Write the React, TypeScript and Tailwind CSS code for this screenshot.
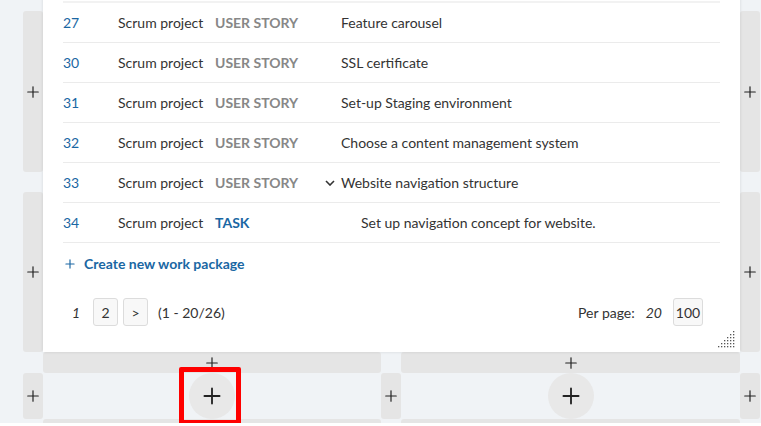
import * as React from "react";
import { Plus } from "lucide-react";

type Row = { id: number; type: "USER STORY" | "TASK"; subject: string; level?: "parent" | "child" };

const rows: Row[] = [
  { id: 27, type: "USER STORY", subject: "Feature carousel" },
  { id: 30, type: "USER STORY", subject: "SSL certificate" },
  { id: 31, type: "USER STORY", subject: "Set-up Staging environment" },
  { id: 32, type: "USER STORY", subject: "Choose a content management system" },
  { id: 33, type: "USER STORY", subject: "Website navigation structure", level: "parent" },
  { id: 34, type: "TASK", subject: "Set up navigation concept for website.", level: "child" },
];

function AddBar({ className }: { className: string }) {
  return (
    <div className={`flex items-center justify-center rounded-[3px] bg-[#e5e5e5] text-[#222] ${className}`}>
      <Plus className="h-[18px] w-[18px]" strokeWidth={1.6} />
    </div>
  );
}

function Grip() {
  const dots: React.ReactNode[] = [];
  for (let r = 0; r < 6; r++) {
    for (let c = 5 - r; c < 6; c++) {
      dots.push(<rect key={`${r}-${c}`} x={c * 3} y={r * 3} width="1.3" height="1.3" fill="#555" />);
    }
  }
  return (
    <svg width="18" height="18" viewBox="0 0 18 18" className="absolute bottom-[3px] right-[4px]">
      {dots}
    </svg>
  );
}

function PageBox({ children, wide }: { children: React.ReactNode; wide?: boolean }) {
  return (
    <span
      className={`flex h-[28px] items-center justify-center rounded-[3px] border border-[#dcdcdc] bg-[#f8f8f8] text-[14px] text-[#333] ${
        wide ? "w-[30px]" : "w-[25px]"
      }`}
    >
      {children}
    </span>
  );
}

function WorkPackages() {
  return (
    <div className="relative z-10 col-start-3 col-span-3 row-start-1 row-span-4 bg-white pl-5 pr-5 pt-[10px] shadow-[0_0_3px_rgba(0,0,0,0.12)]">
      <div className="border-t-2 border-[#f2f2f2]">
        {rows.map((r) => (
          <div key={r.id} className="flex h-10 items-center border-b border-[#ebebeb] text-[14px]">
            <span className="w-[55px] text-[#1a67a3]">{r.id}</span>
            <span className="w-[97px] text-[#333]">Scrum project</span>
            <span
              className={`w-[100px] font-bold ${r.type === "TASK" ? "text-[#1a67a3]" : "text-[#878787]"}`}
            >
              {r.type}
            </span>
            <span className={`flex items-center justify-center ${r.level === "child" ? "w-[46px]" : "w-[26px]"}`}>
              {r.level === "parent" && (
                <svg width="10" height="6" viewBox="0 0 10 6" fill="none" className="ml-[3px]">
                  <path d="M1 1 L5 5 L9 1" stroke="#333" strokeWidth="1.6" />
                </svg>
              )}
            </span>
            <span className="text-[#333]">{r.subject}</span>
          </div>
        ))}
      </div>

      <div className="flex h-[41px] items-center gap-[7px] text-[14px] font-bold text-[#1a67a3]">
        <Plus className="h-[14px] w-[14px]" strokeWidth={2} />
        <span>Create new work package</span>
      </div>

      <div className="mt-[14px] flex items-center justify-between text-[14px] text-[#333]">
        <div className="flex items-center">
          <span className="w-[30px] pl-[9px] italic">1</span>
          <PageBox>2</PageBox>
          <span className="ml-[5px]">
            <PageBox>&gt;</PageBox>
          </span>
          <span className="ml-[10px]">(1 - 20/26)</span>
        </div>
        <div className="mr-[17px] flex items-center">
          <span>Per page:</span>
          <span className="ml-[11px] italic">20</span>
          <span className="ml-[11px]">
            <PageBox wide>100</PageBox>
          </span>
        </div>
      </div>

      <Grip />
    </div>
  );
}

export default function App() {
  return (
    <div
      className="relative h-[423px] overflow-hidden bg-[#f0f3f6]"
      style={{ fontFamily: "Lato, 'Open Sans', sans-serif" }}
    >
      <div className="mt-[-9px] grid grid-cols-[23px_20px_338px_20px_339px_20px_1fr] grid-rows-[20px_161px_20px_160px_21px_46px_20px]">
        <WorkPackages />

        {/* side bars */}
        <AddBar className="col-start-2 row-start-2" />
        <AddBar className="col-start-2 row-start-4" />
        <AddBar className="col-start-2 row-start-6" />
        <AddBar className="col-start-6 row-start-2" />
        <AddBar className="col-start-6 row-start-4" />
        <AddBar className="col-start-6 row-start-6" />
        <AddBar className="col-start-4 row-start-6" />

        {/* row add bars */}
        <AddBar className="col-start-3 row-start-5" />
        <AddBar className="col-start-5 row-start-5" />
        <AddBar className="col-start-3 row-start-7" />
        <AddBar className="col-start-5 row-start-7" />

        {/* empty cells */}
        {["col-start-3", "col-start-5"].map((c) => (
          <div key={c} className={`${c} row-start-6 flex items-center justify-center`}>
            <button className="flex h-[46px] w-[46px] items-center justify-center rounded-full bg-[#e8e8e8] text-[#222]">
              <Plus className="h-[26px] w-[26px]" strokeWidth={1.7} />
            </button>
          </div>
        ))}
      </div>

      {/* highlight */}
      <div className="absolute left-[179px] top-[367px] h-[58px] w-[62px] rounded-[2px] border-[5px] border-[#ff0000]" />
    </div>
  );
}
